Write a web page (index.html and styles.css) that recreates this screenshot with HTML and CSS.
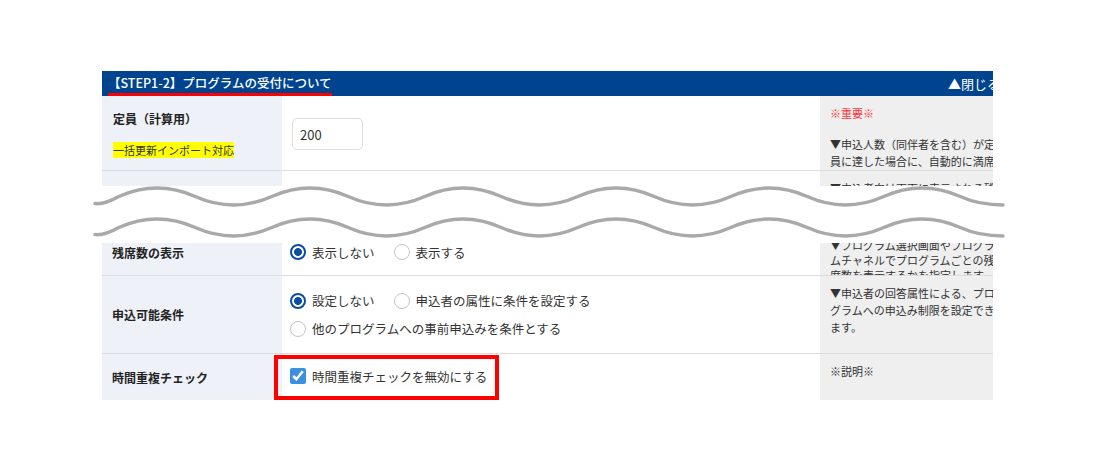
FILE: index.html
```html
<!DOCTYPE html>
<html lang="ja">
<head>
    <meta charset="UTF-8">
    <meta name="viewport" content="width=device-width, initial-scale=1.0">
    <title>プログラムの受付について</title>
    <link rel="stylesheet" href="styles.css">
</head>
<body>
    <div class="page">
        <div class="piece piece-top">
            <div class="sheet">
                <div class="step-head">
                    <span class="step-title">【STEP1-2】プログラムの受付について</span>
                    <span class="step-close">▲閉じる</span>
                </div>
                <div class="row row-capacity">
                    <div class="cell-label">
                        <div class="label-text">定員（計算用）</div>
                        <div class="import-tag"><span>一括更新インポート対応</span></div>
                    </div>
                    <div class="cell-body">
                        <input class="num-input" type="text" value="200">
                    </div>
                    <div class="cell-note">
                        <p class="note-important">※重要※</p>
                        <p>▼申込人数（同伴者を含む）が定員に達した場合に、自動的に満席となります。</p>
                    </div>
                </div>
                <div class="row row-cut">
                    <div class="cell-label"></div>
                    <div class="cell-body"></div>
                    <div class="cell-note">
                        <p>▼申込者向け画面に表示される残席数の設定です。</p>
                    </div>
                </div>
            </div>
        </div>

        <div class="break">
            <svg width="920" height="57" viewBox="0 0 920 57">
                <g fill="none" stroke="#a9a9a9" stroke-width="3.5" stroke-linecap="round">
                    <path d="M5 17.5 C13 18.5 21 14.9 28.75 10.5 Q67 -6.5 105.25 10.5 T181.75 10.5 T258.25 10.5 T334.75 10.5 T411.25 10.5 T487.75 10.5 T564.25 10.5 T640.75 10.5 T717.25 10.5 T793.75 10.5 T870.25 10.5 C880 14.9 895 19 913 19"/>
                    <path transform="translate(0 31)" d="M5 17.5 C13 18.5 21 14.9 28.75 10.5 Q67 -6.5 105.25 10.5 T181.75 10.5 T258.25 10.5 T334.75 10.5 T411.25 10.5 T487.75 10.5 T564.25 10.5 T640.75 10.5 T717.25 10.5 T793.75 10.5 T870.25 10.5 C880 14.9 895 19 913 19"/>
                </g>
            </svg>
        </div>

        <div class="piece piece-bottom">
            <div class="sheet">
                <div class="row row-seats">
                    <div class="cell-label">残席数の表示</div>
                    <div class="cell-body">
                        <div class="opt-line">
                            <label class="opt"><input type="radio" name="seats" checked>表示しない</label>
                            <label class="opt"><input type="radio" name="seats">表示する</label>
                        </div>
                    </div>
                    <div class="cell-note">
                        <p>▼プログラム選択画面やプログラムチャネルでプログラムごとの残席数を表示するかを指定します。</p>
                    </div>
                </div>
                <div class="row row-cond">
                    <div class="cell-label">申込可能条件</div>
                    <div class="cell-body">
                        <div class="opt-line">
                            <label class="opt"><input type="radio" name="cond" checked>設定しない</label>
                            <label class="opt"><input type="radio" name="cond">申込者の属性に条件を設定する</label>
                        </div>
                        <div class="opt-line">
                            <label class="opt"><input type="radio" name="cond">他のプログラムへの事前申込みを条件とする</label>
                        </div>
                    </div>
                    <div class="cell-note">
                        <p>▼申込者の回答属性による、プログラムへの申込み制限を設定できます。</p>
                    </div>
                </div>
                <div class="row row-dup">
                    <div class="cell-label">時間重複チェック</div>
                    <div class="cell-body">
                        <label class="dup-mark"><input type="checkbox" checked>時間重複チェックを無効にする</label>
                    </div>
                    <div class="cell-note">
                        <p>※説明※</p>
                    </div>
                </div>
            </div>
        </div>
    </div>
</body>
</html>
```

FILE: styles.css
```css
body {
    margin: 0;
    font-family: "Noto Sans CJK JP", "Noto Sans", sans-serif;
    color: #333;
    background-color: #fff;
}
.page {
    padding: 71px 0 0 102px;
}
.piece {
    width: 891px;
    overflow: hidden;
}
.piece-top {
    height: 115px;
}
.piece-bottom {
    padding-bottom: 6px;
}
.sheet {
    width: 918px;
}
.step-head {
    height: 25px;
    background-color: #00448f;
    color: #fff;
    font-size: 13px;
    display: flex;
    justify-content: space-between;
    padding: 0 20px 0 6px;
}
.step-title {
    padding-top: 2px;
    line-height: 20px;
    border-bottom: 3px solid #f00;
    font-size: 12.5px;
    font-weight: 500;
}
.step-close {
    line-height: 25px;
}
.row {
    display: grid;
    grid-template-columns: 180px 538px 200px;
    grid-template-rows: minmax(0, 1fr);
    border-bottom: 1px solid #ddd;
    box-sizing: border-box;
    overflow: hidden;
}
.cell-label {
    background-color: #eef2f8;
    padding-left: 10px;
    font-size: 12px;
    font-weight: bold;
    color: #222;
    display: flex;
    align-items: center;
}
.cell-body {
    padding-left: 8px;
    display: flex;
    flex-direction: column;
    justify-content: center;
    align-items: flex-start;
    font-size: 12.5px;
}
.cell-note {
    background-color: #efefef;
    padding: 9px 22px 0 10px;
    font-size: 11px;
    line-height: 17px;
    overflow: hidden;
}
.cell-note p {
    margin: 0;
}
.note-important {
    color: #f33;
}
.cell-note .note-important {
    margin-bottom: 14px;
}

/* row 1 */
.row-capacity {
    height: 75px;
}
.row-capacity .cell-label {
    display: block;
    padding-top: 14px;
    padding-left: 11px;
}
.label-text {
    line-height: 18px;
}
.import-tag {
    margin-top: 14px;
    font-size: 11px;
    font-weight: normal;
    line-height: 16px;
}
.import-tag span {
    background-color: #ff0;
    color: #333;
}
.row-capacity .cell-body {
    justify-content: flex-start;
    padding: 22px 0 0 10px;
}
.num-input {
    width: 71px;
    height: 32px;
    box-sizing: border-box;
    border: 1px solid #ddd;
    border-radius: 5px;
    padding: 0 7px;
    font-family: inherit;
    font-size: 13px;
    color: #333;
}
.row-cut {
    height: 46px;
}

/* bottom rows */
.row-seats {
    margin-top: -14px;
    height: 47px;
}
.row-seats .cell-note {
    line-height: 15px;
}
.row-cond {
    height: 78px;
}
.row-dup {
    height: 46px;
    border-bottom: none;
    overflow: visible;
}
.opt-line {
    display: flex;
    align-items: center;
    height: 28px;
}
.opt {
    display: inline-flex;
    align-items: center;
    gap: 6px;
    margin-right: 19px;
}
.opt input {
    appearance: none;
    flex: none;
    width: 16px;
    height: 16px;
    margin: 0;
    box-sizing: border-box;
    border: 1.5px solid #c4c4c4;
    border-radius: 50%;
    background: #fff;
}
.opt input:checked {
    border: 2px solid #0a4ea3;
    background: radial-gradient(circle, #0a4ea3 0 3.6px, #fff 4.2px);
}
.row-dup .cell-body {
    justify-content: flex-start;
}
.dup-mark {
    display: inline-flex;
    align-items: center;
    gap: 6px;
    height: 47px;
    box-sizing: border-box;
    border: 4px solid #f00;
    padding: 0 8px 3px 12px;
    margin: 1px 0 0 -16px;
}
.dup-mark input {
    width: 16px;
    height: 16px;
    margin: 0;
    accent-color: #3d8fe0;
}
.break {
    height: 57px;
    margin-left: -12px;
}
.break svg {
    display: block;
    overflow: visible;
}
```
